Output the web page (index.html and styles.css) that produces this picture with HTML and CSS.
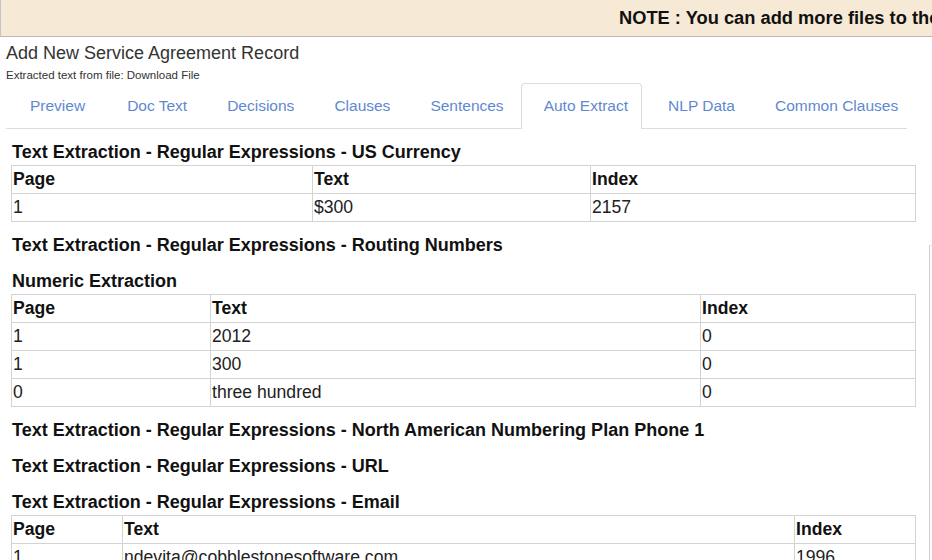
FILE: index.html
```html
<!DOCTYPE html>
<html lang="en">
<head>
<meta charset="utf-8">
<title>Add New Service Agreement Record</title>
<link rel="stylesheet" href="styles.css">
</head>
<body>
<div class="note-bar"><span class="note-text">NOTE : You can add more files to the record by using the upload option on the Attachments tab.</span></div>

<div class="page-head">
  <div class="title">Add New Service Agreement Record</div>
  <div class="subtitle">Extracted text from file: Download File</div>
</div>

<ul class="tabs">
  <li class="tab">Preview</li>
  <li class="tab">Doc Text</li>
  <li class="tab">Decisions</li>
  <li class="tab">Clauses</li>
  <li class="tab">Sentences</li>
  <li class="tab active">Auto Extract</li>
  <li class="tab">NLP Data</li>
  <li class="tab">Common Clauses</li>
</ul>

<div class="content">
  <h4 class="heading first">Text Extraction - Regular Expressions - US Currency</h4>
  <table class="grid t1">
    <colgroup><col class="c1"><col class="c2"><col class="c3"></colgroup>
    <tr><th>Page</th><th>Text</th><th>Index</th></tr>
    <tr><td>1</td><td>$300</td><td>2157</td></tr>
  </table>

  <h4 class="heading">Text Extraction - Regular Expressions - Routing Numbers</h4>

  <h4 class="heading">Numeric Extraction</h4>
  <table class="grid t2">
    <colgroup><col class="c1"><col class="c2"><col class="c3"></colgroup>
    <tr><th>Page</th><th>Text</th><th>Index</th></tr>
    <tr><td>1</td><td>2012</td><td>0</td></tr>
    <tr><td>1</td><td>300</td><td>0</td></tr>
    <tr><td>0</td><td>three hundred</td><td>0</td></tr>
  </table>

  <h4 class="heading">Text Extraction - Regular Expressions - North American Numbering Plan Phone 1</h4>

  <h4 class="heading">Text Extraction - Regular Expressions - URL</h4>

  <h4 class="heading">Text Extraction - Regular Expressions - Email</h4>
  <table class="grid t3">
    <colgroup><col class="c1"><col class="c2"><col class="c3"></colgroup>
    <tr><th>Page</th><th>Text</th><th>Index</th></tr>
    <tr><td>1</td><td>ndevita@cobblestonesoftware.com</td><td>1996</td></tr>
  </table>
</div>

<div class="side-edge"></div>
</body>
</html>
```

FILE: styles.css
```css
html, body {
  margin: 0;
  padding: 0;
  background: #ffffff;
  overflow: hidden;
}

body {
  font-family: "Liberation Sans", Arial, sans-serif;
  color: #222;
  width: 932px;
  height: 560px;
  position: relative;
}

.note-bar {
  height: 36px;
  background: #f6e9d6;
  border-bottom: 1px solid #b9b9b9;
  border-left: 1px solid #c4c4c4;
  white-space: nowrap;
  overflow: hidden;
  padding-left: 618px;
  line-height: 36px;
  font-size: 18.3px;
  font-weight: bold;
  color: #111;
}

.page-head {
  padding-left: 6px;
}

.title {
  margin-top: 5px;
  font-size: 18px;
  line-height: 22px;
  color: #333;
}

.subtitle {
  margin-top: 4px;
  font-size: 11.5px;
  line-height: 14px;
  color: #333;
}

.tabs {
  list-style: none;
  margin: 1px 25px 0 6px;
  padding: 0 0 0 1px;
  display: flex;
  border-bottom: 1px solid #dddddd;
}

.tab {
  height: 44px;
  line-height: 44px;
  padding: 0 13px 0 22px;
  margin-right: 3px;
  margin-bottom: -1px;
  border: 1px solid transparent;
  border-bottom: none;
  border-radius: 4px 4px 0 0;
  font-size: 15.5px;
  color: #5f89cf;
  white-space: nowrap;
}

.tab:first-child {
  margin-right: 5px;
}

.tab.active {
  border-color: #dddddd;
  background: #fff;
  height: 45px;
}

.content {
  padding: 0 17px 0 11px;
}

.heading {
  margin: 16px 0 3px 1px;
  font-size: 18px;
  line-height: 20px;
  font-weight: bold;
  color: #111;
}

.heading.first {
  margin-top: 13px;
}

.grid + .heading {
  margin-top: 13px;
}

.grid {
  width: 904px;
  border-collapse: collapse;
  table-layout: fixed;
  font-size: 17.6px;
}

.grid th,
.grid td {
  border: 1px solid #d3d3d3;
  padding: 0 1px;
  line-height: 27px;
  height: 27px;
  text-align: left;
  white-space: nowrap;
  overflow: hidden;
}

.grid th {
  font-weight: bold;
  color: #111;
}

.grid td {
  color: #222;
}

.t1 .c1 { width: 301px; }
.t1 .c2 { width: 278px; }
.t1 .c3 { width: 325px; }

.t2 .c1 { width: 199px; }
.t2 .c2 { width: 490px; }
.t2 .c3 { width: 215px; }

.t3 .c1 { width: 111px; }
.t3 .c2 { width: 672px; }
.t3 .c3 { width: 121px; }

.side-edge {
  position: absolute;
  left: 929px;
  top: 245px;
  bottom: 0;
  width: 3px;
  border-left: 1px solid #cfcfcf;
  border-top: 1px solid #e4e4e4;
}
```
